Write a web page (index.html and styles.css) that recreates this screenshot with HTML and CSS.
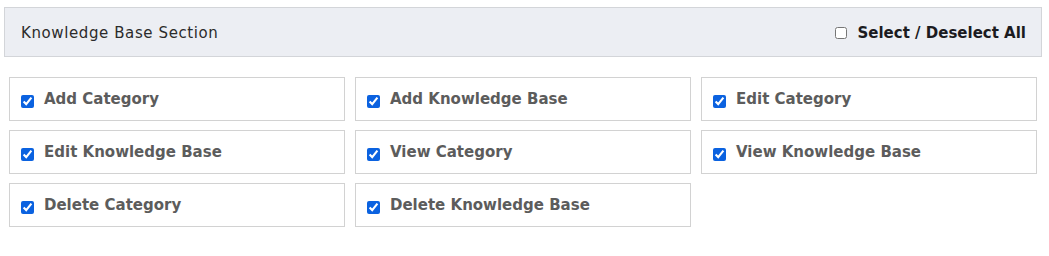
FILE: index.html
```html
<!DOCTYPE html>
<html>
<head>
  <meta charset='utf-8' />
  <title>Permissions</title>
  <link rel="stylesheet" href="styles.css">
</head>
<body>
  <div class="perm">
    <div class="perm-head">
      <span class="perm-title">Knowledge Base Section</span>
      <label class="perm-all"><input type="checkbox" class="chk-all"/> Select / Deselect All</label>
    </div>
    <div class="perm-grid">
      <label class="perm-item"><input type="checkbox" checked/><span>Add Category</span></label>
      <label class="perm-item"><input type="checkbox" checked/><span>Add Knowledge Base</span></label>
      <label class="perm-item"><input type="checkbox" checked/><span>Edit Category</span></label>
      <label class="perm-item"><input type="checkbox" checked/><span>Edit Knowledge Base</span></label>
      <label class="perm-item"><input type="checkbox" checked/><span>View Category</span></label>
      <label class="perm-item"><input type="checkbox" checked/><span>View Knowledge Base</span></label>
      <label class="perm-item"><input type="checkbox" checked/><span>Delete Category</span></label>
      <label class="perm-item"><input type="checkbox" checked/><span>Delete Knowledge Base</span></label>
    </div>
  </div>
</body>
</html>
```

FILE: styles.css
```css
body {
  margin: 0;
  background-color: #ffffff;
  font-family: "DejaVu Sans", "Liberation Sans", sans-serif;
}
.perm {
  padding: 7px 7px 0 4px;
}
.perm-head {
  display: flex;
  align-items: center;
  justify-content: space-between;
  height: 48px;
  padding: 2px 15px 0 16px;
  box-sizing: border-box;
  height: 50px;
  background-color: #eceef3;
  border: 1px solid #d3d5d9;
}
.perm-title {
  font-size: 15px;
  letter-spacing: 0.6px;
  color: #2b2b2b;
}
.perm-all {
  display: flex;
  align-items: center;
  gap: 11px;
  font-size: 15px;
  font-weight: 700;
  color: #1b1b1f;
}
.chk-all {
  width: 12px;
  height: 12px;
  margin: 0;
}
.perm-grid {
  display: grid;
  grid-template-columns: repeat(3, 336px);
  column-gap: 10px;
  row-gap: 9px;
  margin: 20px 0 0 5px;
}
.perm-item {
  display: flex;
  align-items: center;
  gap: 10px;
  height: 42px;
  padding: 0 11px;
  border: 1px solid #d2d2d2;
  font-size: 15px;
  font-weight: 700;
  color: #5c5c5c;
}
.perm-item input {
  width: 13px;
  height: 13px;
  margin: 4px 0 0 0;
  accent-color: #0b62e0;
}
.perm-item span {
  margin-top: 0;
}
```
